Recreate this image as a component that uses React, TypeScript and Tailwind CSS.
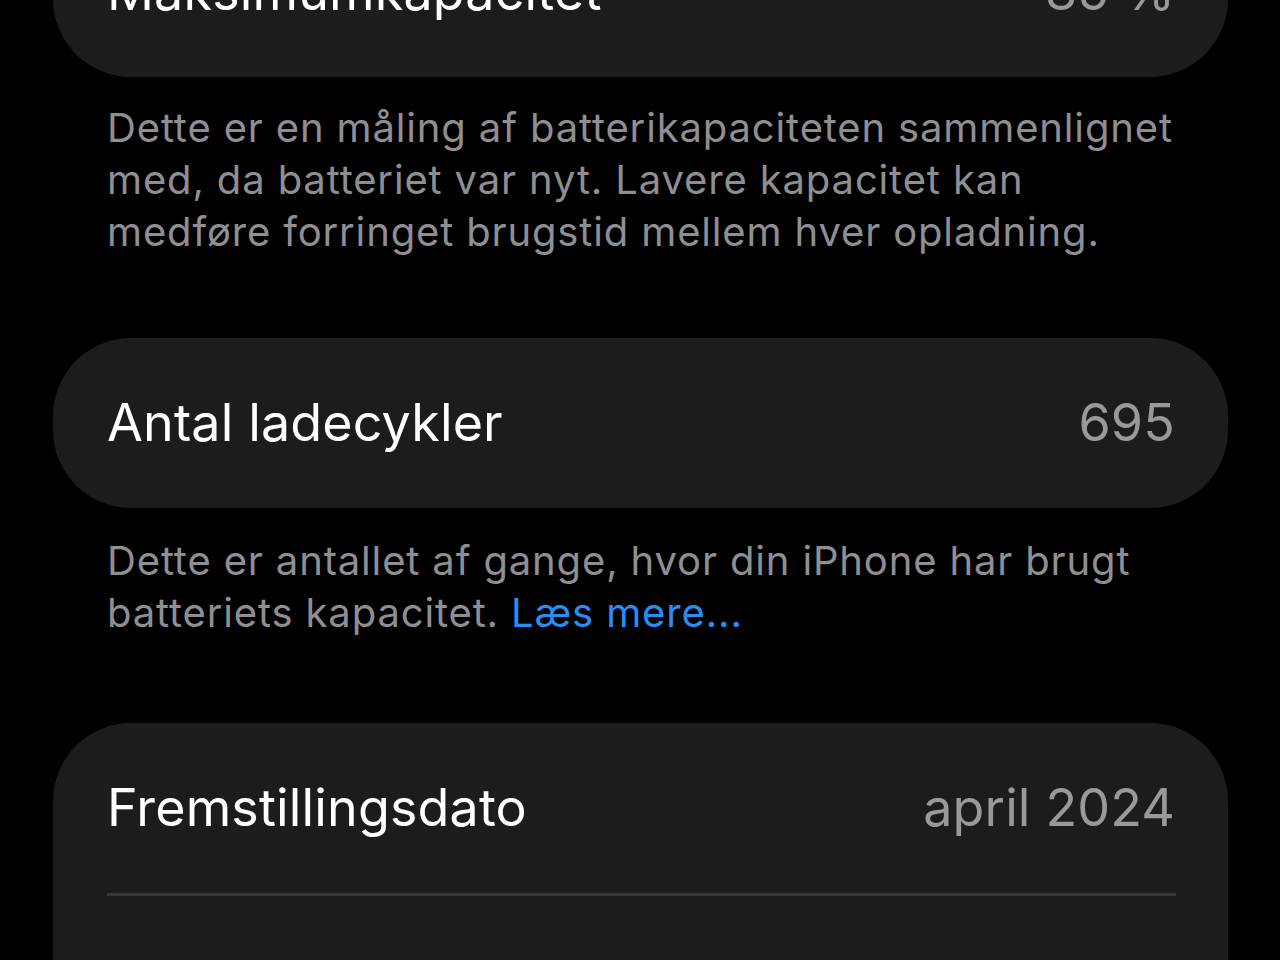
import React from 'react';

interface RowProps {
  label: string;
  value: string;
}

const Row: React.FC<RowProps> = ({ label, value }) => (
  <div className="h-[170px] flex items-center justify-between pl-[54px] pr-[53px]">
    <span className="text-white text-[52px] tracking-[0.15px]">{label}</span>
    <span className="text-[#98989e] text-[52px] tracking-[0.15px]">{value}</span>
  </div>
);

const App: React.FC = () => {
  return (
    <div
      className="w-[1280px] h-[960px] overflow-hidden bg-black"
      style={{ fontFamily: 'Inter, "Noto Sans", sans-serif' }}
    >
      <div className="pl-[53px] pr-[52px]">
        {/* scrolled list: first card is partly above the viewport */}
        <div className="-mt-[93px] rounded-[78px] bg-[#1c1c1e]">
          <Row label="Maksimumkapacitet" value="85 %" />
        </div>

        <p className="mt-[25px] pl-[54px] text-[40px] leading-[52px] tracking-[0.85px] text-[#8e8e93] whitespace-nowrap">
          Dette er en måling af batterikapaciteten sammenlignet
          <br />
          med, da batteriet var nyt. Lavere kapacitet kan
          <br />
          medføre forringet brugstid mellem hver opladning.
        </p>

        <div className="mt-[80px] rounded-[78px] bg-[#1c1c1e]">
          <Row label="Antal ladecykler" value="695" />
        </div>

        <p className="mt-[27px] pl-[54px] text-[40px] leading-[52px] tracking-[0.85px] text-[#8e8e93] whitespace-nowrap">
          Dette er antallet af gange, hvor din iPhone har brugt
          <br />
          batteriets kapacitet. <span className="text-[#2b8cf5]">Læs mere...</span>
        </p>

        <div className="mt-[84px] rounded-t-[78px] bg-[#1c1c1e]">
          <Row label="Fremstillingsdato" value="april 2024" />
          <div className="ml-[54px] mr-[52px] h-[3px] bg-[#38383a]" />
          <div className="h-[170px]" />
        </div>
      </div>
    </div>
  );
};

export default App;
